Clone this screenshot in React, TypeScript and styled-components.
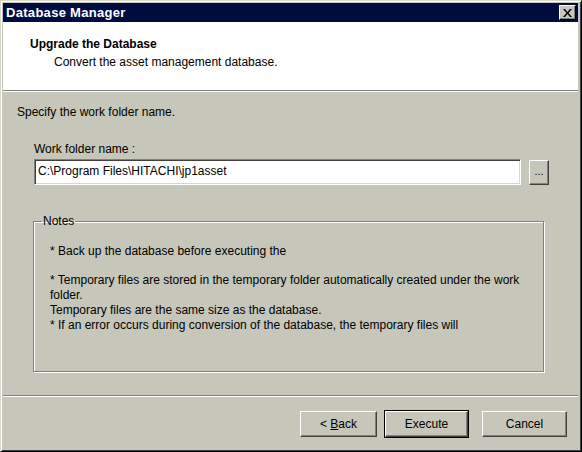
import React from "react";
import styled, { createGlobalStyle } from "styled-components";

const Global = createGlobalStyle`
  html, body { margin: 0; padding: 0; background: #c6c6ba; }
  body { font-family: "Liberation Sans", Arial, sans-serif; font-size: 12px; color: #000; }
  * { box-sizing: border-box; }
`;

const Window = styled.div`
  width: 582px;
  height: 452px;
  display: flex;
  flex-direction: column;
  background: #c6c6ba;
  border-top: 1px solid #d8d8d0;
  border-left: 1px solid #d8d8d0;
  border-right: 1px solid #000;
  border-bottom: 1px solid #000;
  box-shadow: inset 1px 1px 0 #fff, inset -1px -1px 0 #404040;
  padding: 2px 3px 3px 2px;
`;

const TitleBar = styled.div`
  height: 19px;
  background: #000c40;
  display: flex;
  align-items: center;
  justify-content: space-between;
  padding: 0 2px 0 3px;
  color: #fff;
  font-weight: bold;
  font-size: 13px;
  letter-spacing: 0.3px;
  flex-shrink: 0;
`;

const CloseBtn = styled.div`
  width: 17px;
  height: 15px;
  background: #c6c6ba;
  border-top: 1px solid #fff;
  border-left: 1px solid #fff;
  border-right: 1px solid #000;
  border-bottom: 1px solid #000;
  box-shadow: inset -1px -1px 0 #808080;
  display: flex;
  align-items: center;
  justify-content: center;
`;

const Header = styled.div`
  height: 69px;
  background: #fff;
  padding: 15px 0 0 27px;
  flex-shrink: 0;
  border-bottom: 1px solid #808080;
  box-shadow: 0 1px 0 #fff;
`;

const HeaderTitle = styled.div`
  font-weight: bold;
  font-size: 12px;
  line-height: 15px;
`;

const HeaderSub = styled.div`
  padding-left: 24px;
  margin-top: 2px;
  line-height: 16px;
`;

const Content = styled.div`
  flex: 1;
  padding: 14px 0 0 14px;
  display: flex;
  flex-direction: column;
`;

const Instruction = styled.div`
  line-height: 14px;
`;

const FieldBlock = styled.div`
  margin-top: 23px;
  padding-left: 17px;
  display: flex;
  flex-direction: column;
`;

const Label = styled.div`
  line-height: 14px;
  margin-bottom: 3px;
`;

const FieldRow = styled.div`
  display: flex;
  align-items: center;
  gap: 8px;
`;

const Input = styled.div`
  width: 487px;
  height: 26px;
  background: #fff;
  border-top: 1px solid #808080;
  border-left: 1px solid #808080;
  border-right: 1px solid #fff;
  border-bottom: 1px solid #fff;
  box-shadow: inset 1px 1px 0 #404040, inset -1px -1px 0 #d8d8d0;
  padding: 4px 0 0 3px;
  line-height: 14px;
  white-space: nowrap;
`;

const SmallBtn = styled.div`
  width: 20px;
  height: 25px;
  border-top: 1px solid #fff;
  border-left: 1px solid #fff;
  border-right: 1px solid #404040;
  border-bottom: 1px solid #404040;
  box-shadow: inset -1px -1px 0 #808080;
  display: flex;
  align-items: center;
  justify-content: center;
  font-size: 11px;
  padding-bottom: 2px;
`;

const GroupBox = styled.fieldset`
  margin: 29px 0 0 16px;
  width: 511px;
  height: 158px;
  border: 1px solid #808080;
  box-shadow: 1px 1px 0 #fff, inset 1px 1px 0 #fff;
  padding: 16px 10px 0 3px;
  font: inherit;
`;

const Legend = styled.legend`
  padding: 0 1px;
  margin-left: 5px;
  line-height: 14px;
`;

const NoteLine = styled.div<{ $gap?: number; $indent?: boolean }>`
  line-height: 15px;
  margin-top: ${(p) => p.$gap ?? 0}px;
  padding-left: ${(p) => (p.$indent ? 13 : 0)}px;
`;

const Footer = styled.div`
  height: 53px;
  flex-shrink: 0;
  border-top: 1px solid #808080;
  box-shadow: inset 0 1px 0 #fff;
  display: flex;
  justify-content: flex-end;
  align-items: flex-start;
  padding: 15px 11px 0 0;
`;

const Button = styled.div<{ $default?: boolean; $w: number; $ml?: number }>`
  width: ${(p) => p.$w}px;
  height: 26px;
  margin-left: ${(p) => p.$ml ?? 0}px;
  display: flex;
  align-items: center;
  justify-content: center;
  border-top: 1px solid #fff;
  border-left: 1px solid #fff;
  border-right: 1px solid #404040;
  border-bottom: 1px solid #404040;
  box-shadow: inset -1px -1px 0 #808080;
  outline: ${(p) => (p.$default ? "1px solid #000" : "none")};
  line-height: 14px;
`;

const U = styled.span`
  text-decoration: underline;
`;

export default function App() {
  return (
    <>
      <Global />
      <Window>
        <TitleBar>
          <span>Database Manager</span>
          <CloseBtn>
            <svg width="9" height="8" viewBox="0 0 9 8">
              <path d="M0 0h2l2.5 3 2.5-3h2L5.5 4 9 8H7L4.5 5 2 8H0l3.5-4z" fill="#000" />
            </svg>
          </CloseBtn>
        </TitleBar>
        <Header>
          <HeaderTitle>Upgrade the Database</HeaderTitle>
          <HeaderSub>Convert the asset management database.</HeaderSub>
        </Header>
        <Content>
          <Instruction>Specify the work folder name.</Instruction>
          <FieldBlock>
            <Label>Work folder name :</Label>
            <FieldRow>
              <Input>C:\Program Files\HITACHI\jp1asset</Input>
              <SmallBtn>...</SmallBtn>
            </FieldRow>
          </FieldBlock>
          <GroupBox>
            <Legend>Notes</Legend>
            <NoteLine $indent>* Back up the database before executing the</NoteLine>
            <NoteLine $indent $gap={14}>
              * Temporary files are stored in the temporary folder automatically created under the work
            </NoteLine>
            <NoteLine $indent>folder.</NoteLine>
            <NoteLine $indent>Temporary files are the same size as the database.</NoteLine>
            <NoteLine $indent>* If an error occurs during conversion of the database, the temporary files will</NoteLine>
          </GroupBox>
        </Content>
        <Footer>
          <Button $w={77}>
            &lt;&nbsp;<U>B</U>ack
          </Button>
          <Button $w={83} $ml={8} $default>
            Execute
          </Button>
          <Button $w={85} $ml={14}>
            Cancel
          </Button>
        </Footer>
      </Window>
    </>
  );
}
